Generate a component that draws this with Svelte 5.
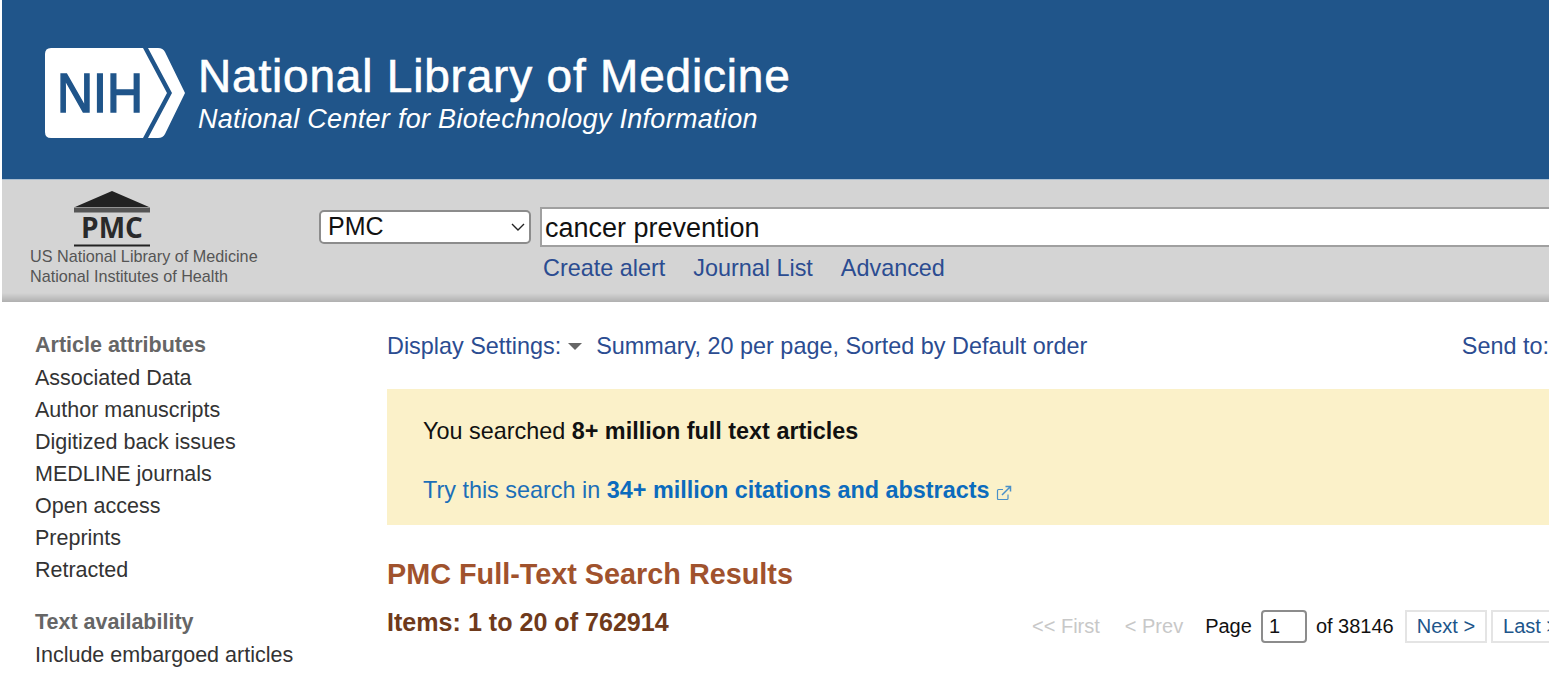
<script>
	const groups = [
		{ title: 'Article attributes', items: ['Associated Data', 'Author manuscripts', 'Digitized back issues', 'MEDLINE journals', 'Open access', 'Preprints', 'Retracted'] },
		{ title: 'Text availability', items: ['Include embargoed articles'] }
	]
	const links = ['Create alert', 'Journal List', 'Advanced']
	let term = 'cancer prevention'
	let page = 1
</script>

<div class="page">
	<header class="banner">
		<svg class="nih" viewBox="0 0 140 90" width="140" height="90">
			<path d="M6 0H98L122 45L98 90H6Q0 90 0 84V6Q0 0 6 0Z" fill="#fff" />
			<path d="M103 0H113Q118 0 120 4L140 45L120 86Q118 90 113 90H103L127 45Z" fill="#fff" />
			<text x="12" y="64" class="nih-text" textLength="86" lengthAdjust="spacingAndGlyphs">NIH</text>
		</svg>
		<div class="banner-text">
			<h1>National Library of Medicine</h1>
			<p>National Center for Biotechnology Information</p>
		</div>
	</header>

	<div class="searchbar">
		<div class="brand">
			<svg class="pmc" viewBox="0 0 76 56" width="76" height="56">
				<path d="M38 0L75 16H1Z" fill="#222" />
				<rect x="0" y="16.5" width="76" height="5" fill="#555" />
				<text x="38" y="47" class="pmc-text" text-anchor="middle">PMC</text>
				<rect x="0" y="53.5" width="76" height="2" fill="#222" />
			</svg>
			<div class="brand-lines">
				<span>US National Library of Medicine</span>
				<span>National Institutes of Health</span>
			</div>
		</div>
		<div class="search">
			<div class="fields">
				<div class="select-wrap">
					<select aria-label="Database">
						<option>PMC</option>
					</select>
					<svg class="chevron" viewBox="0 0 14 8" width="14" height="8">
						<path d="M1 1L7 7L13 1" fill="none" stroke="#222" stroke-width="1.4" />
					</svg>
				</div>
				<input class="term" type="text" bind:value={term} aria-label="Search term" />
			</div>
			<nav class="links">
				{#each links as link}
					<a href="#top">{link}</a>
				{/each}
			</nav>
		</div>
	</div>

	<div class="body">
		<aside class="filters">
			{#each groups as group}
				<section>
					<h3>{group.title}</h3>
					<ul>
						{#each group.items as item}
							<li>{item}</li>
						{/each}
					</ul>
				</section>
			{/each}
		</aside>

		<main>
			<div class="settings">
				<div class="display">
					<span>Display Settings:</span>
					<i class="caret"></i>
					<span class="summary">Summary, 20 per page, Sorted by Default order</span>
				</div>
				<span>Send to:</span>
			</div>

			<div class="notice">
				<p class="searched">You searched <b>8+ million full text articles</b></p>
				<p class="try">
					Try this search in <b>34+ million citations and abstracts</b>
					<svg viewBox="0 0 16 16" width="16" height="16">
						<path d="M12 9.5V13.5Q12 14.5 11 14.5H2.5Q1.5 14.5 1.5 13.5V5.5Q1.5 4.5 2.5 4.5H7" fill="none" stroke="#4a90c8" stroke-width="1.2" />
						<path d="M6 10L14 2M9.5 1.5H14.5V6.5" fill="none" stroke="#4a90c8" stroke-width="1.5" />
					</svg>
				</p>
			</div>

			<h2>PMC Full-Text Search Results</h2>

			<div class="pager-row">
				<h4>Items: 1 to 20 of 762914</h4>
				<div class="pager">
					<span class="off first">&lt;&lt; First</span>
					<span class="off prev">&lt; Prev</span>
					<span class="label">Page</span>
					<input class="page-no" type="text" bind:value={page} aria-label="Page" />
					<span class="label of">of 38146</span>
					<a class="btn" href="#top">Next &gt;</a>
					<a class="btn" href="#top">Last &gt;&gt;</a>
				</div>
			</div>
		</main>
	</div>
</div>

<style>
	:global(body) {
		background: #fff;
		font-family: "Liberation Sans", Arial, sans-serif;
		overflow: hidden;
	}

	.page {
		width: 1547px;
		height: 674px;
		margin-left: 2px;
		overflow: hidden;
	}

	.banner {
		height: 179px;
		background: #20558a;
		display: flex;
		align-items: flex-start;
		padding: 48px 0 0 43px;
		box-sizing: border-box;
		gap: 13px;
		color: #fff;
	}

	.nih-text {
		font: 400 56px "Liberation Sans", sans-serif;
		fill: #20558a;
		stroke: #20558a;
		stroke-width: 1.6px;
	}

	h1 {
		margin: 0;
		font-size: 46px;
		font-weight: 400;
		line-height: 56px;
		letter-spacing: 0.8px;
		-webkit-text-stroke: 0.6px #fff;
	}

	.banner-text p {
		margin: -1px 0 0;
		font-size: 27px;
		font-style: italic;
		line-height: 32px;
		letter-spacing: 0.3px;
	}

	.searchbar {
		height: 123px;
		box-sizing: border-box;
		border-top: 1px solid #a9bdd0;
		background: linear-gradient(#d4d4d4 0, #d4d4d4 113px, #b0b0b0 122px);
		display: flex;
		padding-left: 28px;
	}

	.brand {
		width: 289px;
		padding-top: 11px;
		display: flex;
		flex-direction: column;
	}

	.pmc {
		margin-left: 44px;
	}

	.pmc-text {
		font: 700 28px "Open Sans", sans-serif;
		fill: #2a2a2a;
	}

	.brand-lines {
		display: flex;
		flex-direction: column;
		font-size: 16.2px;
		line-height: 20px;
		color: #555;
		margin-top: -1px;
	}

	.search {
		flex: 1;
		padding-top: 27px;
		min-width: 0;
	}

	.fields {
		display: flex;
		align-items: center;
		gap: 9px;
	}

	.select-wrap {
		position: relative;
		width: 212px;
		height: 34px;
		flex: none;
	}

	select {
		width: 100%;
		height: 100%;
		appearance: none;
		box-sizing: border-box;
		background: #fff;
		border: 2px solid #8c8c8c;
		border-radius: 5px;
		padding: 0 7px 3px;
		font: 25px "Liberation Sans", sans-serif;
		color: #111;
	}

	.chevron {
		position: absolute;
		right: 6px;
		top: 13px;
	}

	.term {
		flex: 1;
		min-width: 0;
		height: 40px;
		box-sizing: border-box;
		border: 2px solid #a0a0a0;
		border-right: 0;
		background: #fff;
		padding: 2px 3px 0;
		font: 27px "Liberation Sans", sans-serif;
		color: #111;
	}

	.links {
		display: flex;
		gap: 28px;
		margin: 7px 0 0 224px;
		font-size: 23.4px;
		line-height: 28px;
	}

	.links a {
		color: #2b4c91;
		text-decoration: none;
	}

	.body {
		display: flex;
		padding-left: 33px;
	}

	.filters {
		width: 352px;
		flex: none;
		padding-top: 27px;
		font-size: 21.5px;
		color: #333;
	}

	.filters section {
		margin-bottom: 20px;
	}

	h3 {
		margin: 0 0 1px;
		font-size: 21.5px;
		line-height: 32px;
		color: #666;
	}

	ul {
		list-style: none;
		margin: 0;
		padding: 0;
	}

	li {
		line-height: 32px;
	}

	main {
		flex: 1;
		min-width: 0;
		padding-top: 28px;
	}

	.settings {
		display: flex;
		justify-content: space-between;
		color: #2b4c91;
		font-size: 23.4px;
		line-height: 32px;
		height: 32px;
		white-space: nowrap;
	}

	.caret {
		display: inline-block;
		width: 0;
		height: 0;
		border: 7px solid transparent;
		border-top: 7px solid #666;
		border-bottom: 0;
		margin: 0 8px 2px 0;
		vertical-align: middle;
	}

	.notice {
		margin-top: 27px;
		height: 136px;
		box-sizing: border-box;
		background: #fbf1c9;
		padding: 27px 0 0 36px;
		font-size: 23.4px;
		line-height: 30px;
	}

	.notice p {
		margin: 0;
	}

	.searched {
		color: #111;
	}

	.try {
		margin-top: 29px !important;
		color: #1b6fb8;
	}

	.try b {
		color: #0b6bbd;
	}

	.try svg {
		vertical-align: -3px;
	}

	h2 {
		margin: 32px 0 0;
		font-size: 28.8px;
		line-height: 34px;
		color: #a0522d;
	}

	.pager-row {
		display: flex;
		justify-content: space-between;
		align-items: flex-start;
		margin-top: 14px;
		white-space: nowrap;
	}

	h4 {
		margin: 0;
		font-size: 25.1px;
		line-height: 34px;
		color: #6f3a1b;
	}

	.pager {
		display: flex;
		align-items: center;
		font-size: 20px;
		margin-top: 5px;
		flex: none;
		width: 517px;
	}

	.off {
		color: #c8c8c8;
	}

	.first {
		margin-right: 25px;
	}

	.prev {
		margin-right: 22px;
	}

	.label {
		color: #111;
	}

	.page-no {
		width: 46px;
		height: 33px;
		box-sizing: border-box;
		margin: 0 9px;
		border: 2px solid #8c8c8c;
		border-radius: 4px;
		padding: 0 6px;
		font: 20px "Liberation Sans", sans-serif;
		color: #111;
	}

	.of {
		margin-right: 11px;
	}

	.btn {
		border: 2px solid #e4e4e4;
		height: 33px;
		line-height: 29px;
		box-sizing: border-box;
		padding: 0 10px;
		margin-right: 4px;
		color: #20558a;
		text-decoration: none;
		flex: none;
	}
</style>
